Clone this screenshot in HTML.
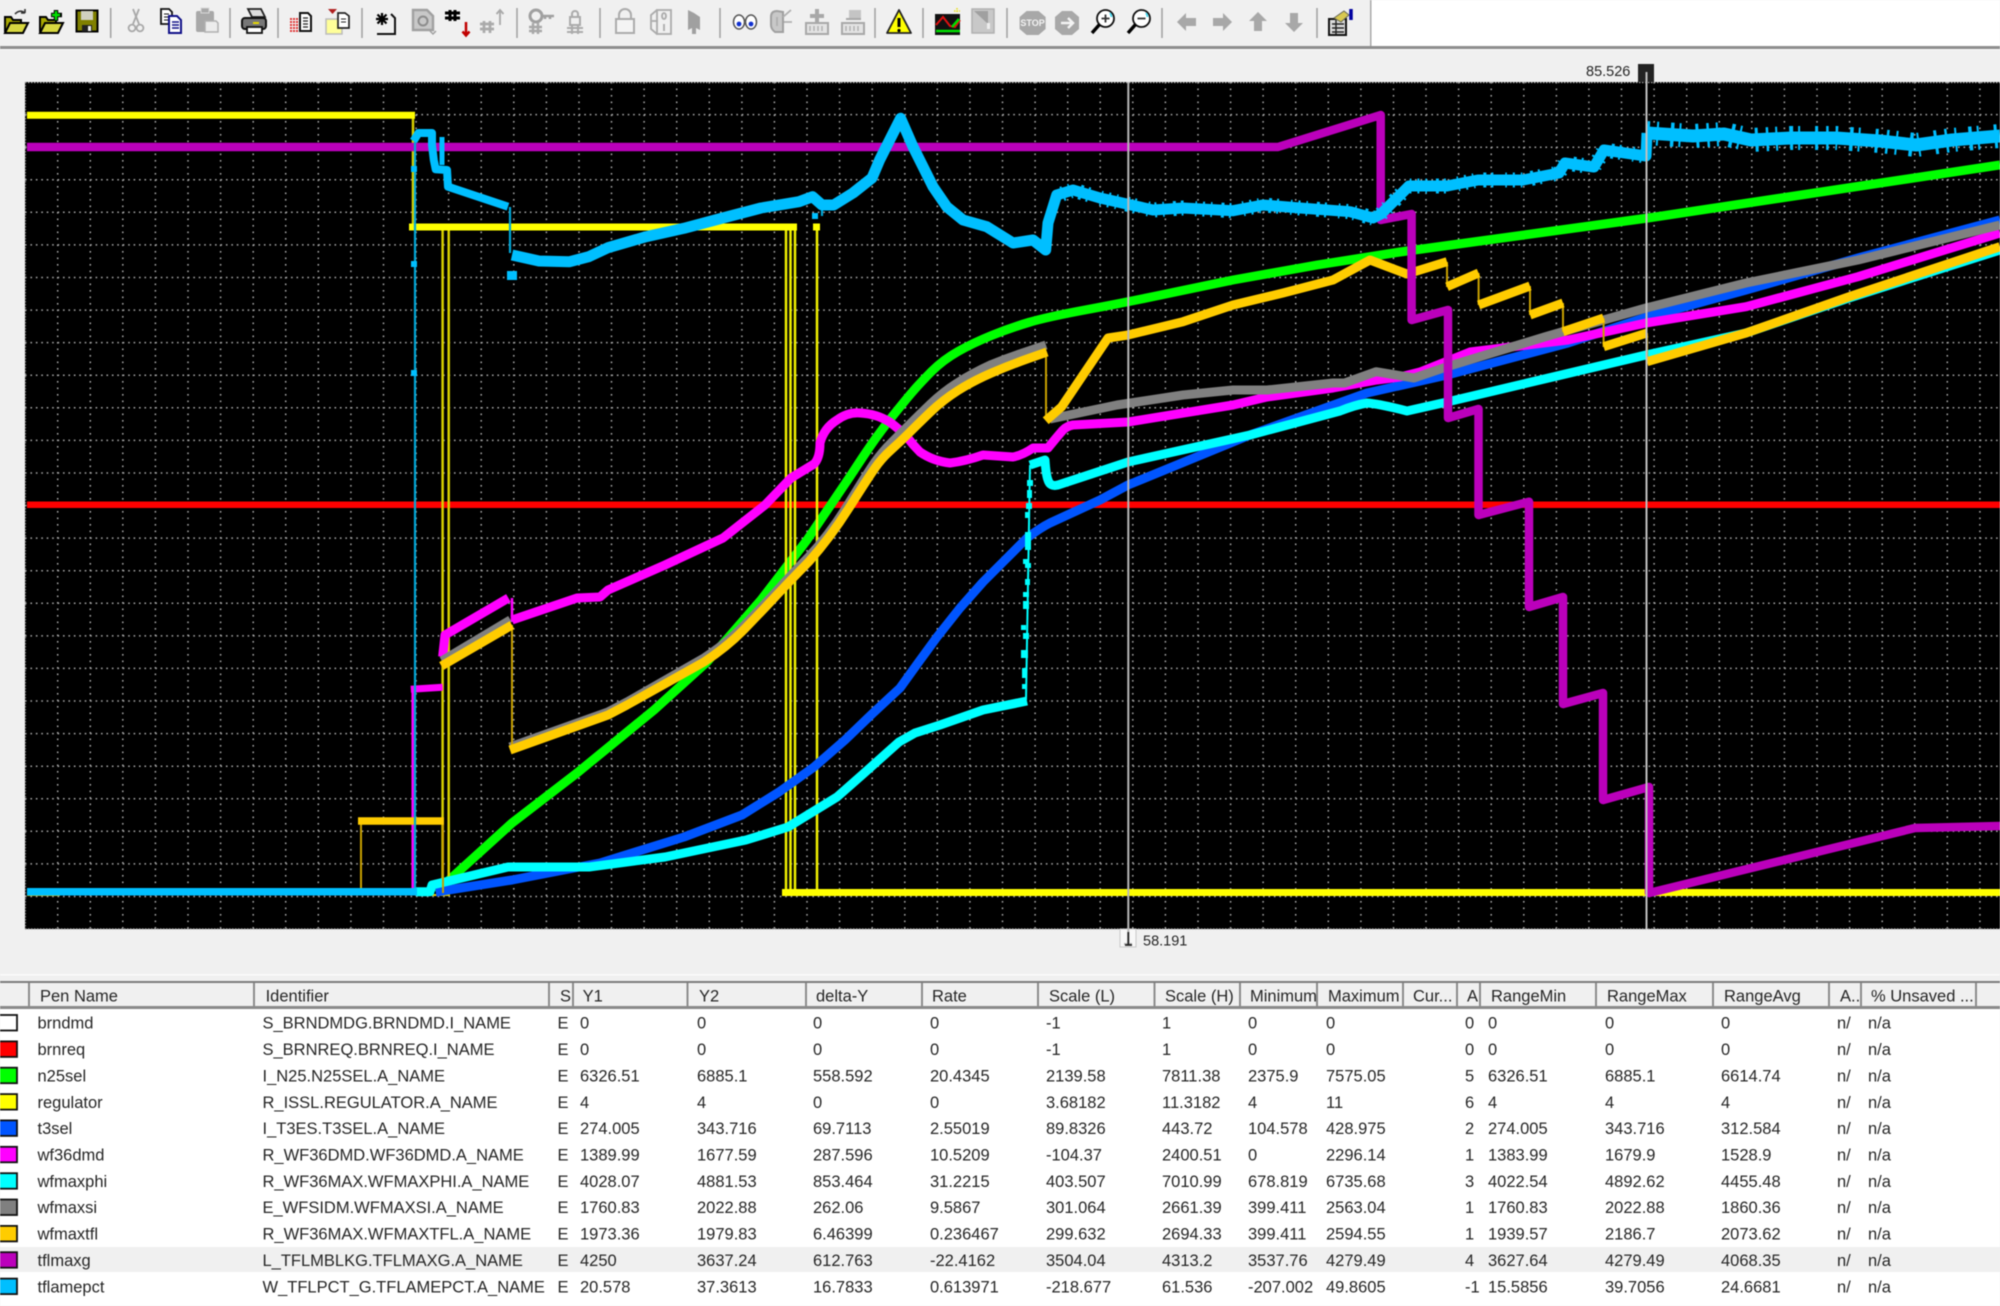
<!DOCTYPE html>
<html><head><meta charset="utf-8"><title>Trend</title>
<style>
html,body{margin:0;padding:0;background:#f0f0f0;width:2000px;height:1306px;overflow:hidden}
svg{display:block;filter:blur(.45px)}
text{font-family:"Liberation Sans",sans-serif;font-size:16.5px;fill:#262626}
.c{fill:none;stroke-linejoin:round;stroke-linecap:butt}
</style></head><body>
<svg width="2000" height="1306" viewBox="0 0 2000 1306" xmlns="http://www.w3.org/2000/svg">
<rect width="2000" height="1306" fill="#f0f0f0"/>
<!-- toolbar -->
<rect x="1371" y="0" width="629" height="46" fill="#fff"/>
<rect x="1370" y="0" width="1.5" height="46" fill="#aaa"/>
<rect y="46" width="2000" height="3" fill="#8e8e8e"/>
<rect y="49" width="2000" height="1" fill="#fafafa"/>
<g stroke="#a0a0a0" stroke-width="1.5"><path d="M110.7 8V38M230 8V38M278 8V38M362 8V38M517 8V38M600 8V38M720 8V38M875 8V38M923 8V38M1007 8V38M1162 8V38M1317 8V38"/></g>

<g transform="translate(16,22)"><path d="M-11 10V-5h6l2 3h8v3" fill="#a8a800" stroke="#000" stroke-width="2"/><path d="M-11 11l5-10h18l-5 10z" fill="#d8d840" stroke="#000" stroke-width="2"/><path d="M-1-8q5-5 10-1m0 0v-4m0 4h-4" fill="none" stroke="#333" stroke-width="1.6"/></g>
<g transform="translate(51,22)"><path d="M-11 10V-5h6l2 3h8v3" fill="#a8a800" stroke="#000" stroke-width="2"/><path d="M-11 11l5-10h18l-5 10z" fill="#d8d840" stroke="#000" stroke-width="2"/><path d="M5-12v11M0-7h11" stroke="#000" stroke-width="4.5"/><path d="M5-11v9M1-7h8" stroke="#00e000" stroke-width="2.4"/></g>
<g transform="translate(87,21)"><rect x="-10.5" y="-10.5" width="21" height="21" fill="#808000" stroke="#000" stroke-width="2"/><rect x="-6" y="-10" width="12" height="9" fill="#d0d0c0"/><rect x="-5" y="4" width="10" height="6.5" fill="#222"/><rect x="1" y="5" width="3" height="5" fill="#eee"/></g>
<g transform="translate(136,21)" fill="none" stroke="#a8a8a8" stroke-width="1.8"><path d="M-3-12L3 3M3-12L-3 3"/><circle cx="-4" cy="7" r="3.4"/><circle cx="4" cy="7" r="3.4"/></g>
<g transform="translate(171,20)"><path d="M-10-11h8l3 3v12H-10z" fill="#fff" stroke="#111" stroke-width="1.8"/><path d="M-7-6h5M-7-3h5M-7 0h5" stroke="#111"/><path d="M-2-4h8l4 4v13H-2z" fill="#fff" stroke="#101088" stroke-width="2"/><path d="M1 2h7M1 5h7M1 8h7" stroke="#101088" stroke-width="1.4"/></g>
<g transform="translate(207,21)"><rect x="-11" y="-10" width="18" height="21" rx="2" fill="#a8a8a8"/><rect x="-6" y="-13" width="8" height="5" fill="#a8a8a8" stroke="#d8d8d8"/><path d="M-2 0h11l2 2v9H-2z" fill="#ececec" stroke="#b0b0b0" stroke-width="1.5"/></g>
<g transform="translate(254,21)"><path d="M-6-12h13l4 8H-2z" fill="#ddd" stroke="#222" stroke-width="1.8"/><rect x="-12" y="-3" width="24" height="11" rx="3" fill="#777" stroke="#111" stroke-width="2"/><rect x="-7" y="6" width="15" height="6" fill="#fff" stroke="#111" stroke-width="1.8"/><path d="M-1 2h6" stroke="#e8d800" stroke-width="2"/></g>
<g transform="translate(301,22)"><path fill="none" stroke="#d22" stroke-width="1.8" stroke-dasharray="2 1" d="M-11-3h10M-11 0h10M-11 3h10M-11 6h10M-11 9h10"/><path d="M-1-9H7l3 3V9H-1z" fill="#fff" stroke="#111" stroke-width="2"/><path d="M2-4h5M2-1h5M2 2h5M2 5h5" stroke="#222" stroke-width="1.3"/></g>
<g transform="translate(338,22)"><path d="M-12 12V-3h16v15z" fill="#ffff99" stroke="#bbb" stroke-width="1.5"/><path d="M-10-13h9l-4.500 5z" fill="#b02020"/><path d="M0-9h7l4 3V6H0z" fill="#fff" stroke="#222" stroke-width="1.7"/><path d="M3-3h5M3 0h5" stroke="#222"/></g>
<g transform="translate(386,22)"><path d="M-9 12H9V-4L5-8" fill="none" stroke="#111" stroke-width="2"/><path d="M-4-9V3M-10-3H2M-8.500-7.500l9 9M.5-7.500l-9 9" stroke="#000" stroke-width="2.200"/></g>
<g transform="translate(422,21)"><path d="M-9-11H5l6 6V9H-9z" fill="#c8c8c8" stroke="#a0a0a0" stroke-width="2.4"/><circle cx="1" cy="0" r="4.500" fill="none" stroke="#8c8c8c" stroke-width="2"/><path d="M8 10l3 3 3-3" stroke="#a0a0a0" fill="none" stroke-width="1.500"/></g>
<g transform="translate(457,22)"><path d="M-7-12V-1M-2-12V-1M-12-9H3M-12-4H3" stroke="#000" stroke-width="3"/><path d="M9 0V13M5.500 9.500l3.500 4 3.500-4" stroke="#c00000" stroke-width="2.500" fill="none"/></g>
<g transform="translate(492,24)"><path d="M-8-3V9M-2-3V9M-12 0H2M-12 5H2" stroke="#aaa" stroke-width="2.700"/><path d="M8 1V-14M4.500-10l3.500-4 3.500 4" stroke="#a8a8a8" stroke-width="1.800" fill="none"/></g>
<g transform="translate(541,22)"><circle cx="-5" cy="-6" r="6" fill="none" stroke="#a0a0a0" stroke-width="3"/><path d="M0-6H13M9-6v3M4-6v3" stroke="#a0a0a0" stroke-width="2.500"/><path d="M-8 1v11M-3 1v11M-12 5h13M-12 9h13" stroke="#a8a8a8" stroke-width="2.400"/></g>
<g transform="translate(575,22)" fill="none" stroke="#ababab" stroke-width="2"><path d="M-3-5v-3a3 3 0 0 1 6 0v3"/><rect x="-5" y="-5" width="10" height="8"/><path d="M-8 6H8M-3 3v9M3 3v9M-8 10H8"/></g>
<g transform="translate(625,22)" fill="none" stroke="#ababab" stroke-width="2"><path d="M-6-3v-4a6 6 0 0 1 12 0v4"/><rect x="-9" y="-3" width="18" height="14" fill="#f4f4f4"/></g>
<g transform="translate(662,22)" fill="none" stroke="#ababab" stroke-width="1.800"><rect x="-5" y="-12" width="14" height="24"/><path d="M-5-12l-6 5v14l6 5"/><path d="M-10-1h6"/><ellipse cx="2" cy="-6" rx="2" ry="3"/><path d="M2 2v7"/></g>
<g transform="translate(694,22)"><path d="M-6-12l6 3 6 4V8l-4-2v6h-4V6l-4 2z" fill="#a0a0a0"/></g>
<g transform="translate(745,22)"><ellipse cx="-6" cy="0" rx="5.500" ry="7" fill="#fff" stroke="#555" stroke-width="1.500"/><ellipse cx="6" cy="0" rx="5.500" ry="7" fill="#fff" stroke="#555" stroke-width="1.500"/><circle cx="-6" cy="2" r="2.400" fill="#1030d0"/><circle cx="6" cy="2" r="2.400" fill="#1030d0"/></g>
<g transform="translate(780,22)"><path d="M-9-5q0-6 6-6l6 1v20H-5q-4-3-4-7z" fill="#c8c8c8" stroke="#a0a0a0" stroke-width="2"/><path d="M3-5L11-12M4 0H12M-3-5v9" stroke="#b0b0b0" stroke-width="1.800"/></g>
<g transform="translate(817,22)"><path d="M-2-13h4v5h5v4H2v4h-4v-4h-5v-4h5z" fill="#a8a8a8"/><rect x="-11" y="1" width="22" height="11" fill="#e4e4e4" stroke="#a8a8a8" stroke-width="2"/><path d="M-7 4v5M-3 4v5M1 4v5M5 4v5" stroke="#b0b0b0" stroke-width="1.500"/></g>
<g transform="translate(853,22)"><path d="M-4-12H8v9H-4z" fill="#c4c4c4"/><path d="M-7-3H8" stroke="#a8a8a8" stroke-width="2"/><rect x="-11" y="1" width="22" height="11" fill="#e4e4e4" stroke="#a8a8a8" stroke-width="2"/><path d="M-7 4v5M-3 4v5M1 4v5M5 4v5" stroke="#b0b0b0" stroke-width="1.500"/></g>
<g transform="translate(899,22)"><path d="M0-12L12 11H-12z" fill="#ffff00" stroke="#222" stroke-width="1.800" stroke-linejoin="round"/><path d="M0-4V5" stroke="#000" stroke-width="3"/><circle cx="0" cy="8.500" r="1.600"/></g>
<g transform="translate(948,22)"><rect x="-13" y="-8" width="25" height="21" fill="#111"/><path d="M-12 9H12" stroke="#00e000" stroke-width="2.500"/><path d="M-12 3L-5-5 2 4l5 1 5-7" fill="none" stroke="#e01010" stroke-width="2"/><path d="M4 5L11-3" stroke="#00dd00" stroke-width="2.500"/><path d="M9-14v5M6-11h6" stroke="#e8e020" stroke-width="1.500" stroke-dasharray="1.500 1"/></g>
<g transform="translate(983,21)"><path d="M-11-12H11V12H-11z" fill="#c8c8c8" stroke="#b0b0b0" stroke-width="1.500"/><path d="M-9-10L5 3V-10z" fill="#a0a0a0"/><rect x="4" y="2" width="3" height="6" fill="#eee"/></g>
<g transform="translate(1032.600,23)"><path d="M-6-12H6l7 6V6L6 12H-6L-13 6V-6z" fill="#a8a8a8"/><text x="0" y="3" text-anchor="middle" style="font-size:9px;font-weight:bold;fill:#f4f4f4">STOP</text></g>
<g transform="translate(1067,23)"><path d="M-5-12H5l7 6V6L5 12H-5L-12 6V-6z" fill="#a8a8a8"/><path d="M-6 0H6M1-5L6 0 1 5" stroke="#f4f4f4" stroke-width="2.500" fill="none"/></g>
<g transform="translate(1103,22)"><circle cx="2.500" cy="-3.500" r="8.500" fill="#fff" stroke="#111" stroke-width="1.800"/><path d="M-3.500 2.500L-11 11" stroke="#000" stroke-width="3.400"/><path d="M2.500-7.500v8M-1.500-3.500h8" stroke="#333" stroke-width="1.800"/><path d="M7-9a7 7 0 0 1 1.500 4" stroke="#40d8f0" stroke-width="1.800" fill="none"/></g>
<g transform="translate(1139,22)"><circle cx="2.500" cy="-3.500" r="8.500" fill="#fff" stroke="#111" stroke-width="1.800"/><path d="M-3.500 2.500L-11 11" stroke="#000" stroke-width="3.400"/><path d="M-1.500-3.500h8" stroke="#333" stroke-width="1.800"/><path d="M7-9a7 7 0 0 1 1.500 4" stroke="#40d8f0" stroke-width="1.800" fill="none"/></g>
<path transform="translate(1187,22)" d="M-10 0L-1-9V-4H9V4H-1V9z" fill="#a8a8a8"/>
<path transform="translate(1222,22)" d="M10 0L1-9V-4H-9V4H1V9z" fill="#a8a8a8"/>
<path transform="translate(1258,22)" d="M0-10L9-1H4V9H-4V-1H-9z" fill="#a8a8a8"/>
<path transform="translate(1294,22)" d="M0 10L9 1H4V-9H-4V1H-9z" fill="#a8a8a8"/>
<g transform="translate(1341,22)"><rect x="-12" y="-3" width="17" height="16" fill="#ddd" stroke="#111" stroke-width="2"/><path d="M-9 2H3M-9 6H3M-9 10H3M-5-2V12" stroke="#222" stroke-width="1.400"/><path d="M-7-4L3-11l5 4L0 0z" fill="#d8c850" stroke="#665" stroke-width="1"/><path d="M10-13V-2" stroke="#0000a0" stroke-width="3.500"/></g>

<!-- plot -->
<rect x="25" y="82" width="1975" height="847" fill="#000"/>
<path d="M25 82.500H2000M25 929H2000" stroke="#aaa" stroke-width="1.200" stroke-dasharray="1.500 1.500" fill="none"/>
<path d="M25.500 82V929" stroke="#777" stroke-width="1.200" stroke-dasharray="1.500 1.500" fill="none"/>
<path fill="none" stroke="#a4a4a4" stroke-width="1.500" stroke-dasharray="1.600 3.830" d="M25 114.600H2000M25 147.200H2000M25 179.700H2000M25 212.300H2000M25 244.900H2000M25 277.500H2000M25 310.100H2000M25 342.600H2000M25 375.200H2000M25 407.800H2000M25 440.400H2000M25 473H2000M25 505.500H2000M25 538.100H2000M25 570.700H2000M25 603.300H2000M25 635.900H2000M25 668.400H2000M25 701H2000M25 733.600H2000M25 766.200H2000M25 798.800H2000M25 831.300H2000M25 863.900H2000M25 896.500H2000"/>
<path fill="none" stroke="#a4a4a4" stroke-width="1.500" stroke-dasharray="1.600 4.900" d="M57.700 82V929M90.300 82V929M122.800 82V929M155.400 82V929M188 82V929M220.600 82V929M253.200 82V929M285.700 82V929M318.300 82V929M350.900 82V929M383.500 82V929M416.100 82V929M448.600 82V929M481.200 82V929M513.800 82V929M546.400 82V929M579 82V929M611.500 82V929M644.100 82V929M676.700 82V929M709.300 82V929M741.900 82V929M774.400 82V929M807 82V929M839.600 82V929M872.200 82V929M904.800 82V929M937.300 82V929M969.900 82V929M1002.500 82V929M1035.100 82V929M1067.700 82V929M1100.200 82V929M1132.800 82V929M1165.400 82V929M1198 82V929M1230.600 82V929M1263.100 82V929M1295.700 82V929M1328.300 82V929M1360.900 82V929M1393.500 82V929M1426 82V929M1458.600 82V929M1491.200 82V929M1523.800 82V929M1556.400 82V929M1588.900 82V929M1621.500 82V929M1654.100 82V929M1686.700 82V929M1719.300 82V929M1751.800 82V929M1784.400 82V929M1817 82V929M1849.600 82V929M1882.200 82V929M1914.700 82V929M1947.300 82V929M1979.900 82V929"/>

<!-- red -->
<path class="c" d="M27 504.700H2000" stroke="#ff0000" stroke-width="6.500"/>
<!-- green -->
<path class="c" stroke="#00ff00" stroke-width="9" d="M436 892L512 823L577 773L654 710L707 662L761 600L807 540L849 478L862.500 457.500Q876 437 889.500 420Q903 403 911.500 393Q920 383 931.500 371.500Q943 360 958 351.500Q973 343 991.500 335.500Q1010 328 1028.500 322.500Q1047 317 1087.500 309.500Q1128 302 1180 291L1233 280L1317 265L1400 252L1648 218L2000 165"/>
<!-- regulator -->
<path class="c" stroke="#d8d000" stroke-width="2.500" d="M413 118V227M442.600 227V893M448.700 227V893"/>
<path class="c" stroke="#f0f000" stroke-width="2.500" d="M786 227V893M790.500 227V893M795 227V893M817 227V893"/>
<path class="c" stroke="#ffff00" stroke-width="7" d="M27 115.300H415M409 227H797M813 227H820M782 892.500H2000"/>
<path class="c" stroke="#e0c800" stroke-width="2" d="M27 895H60M420 895H450"/>
<!-- t3sel -->
<path class="c" stroke="#0055ff" stroke-width="9" d="M435.700 892L512 880L600 863L684 837L742 815L779 792L814 767L845 740L872 714L900 688L918 663L937 637L960 608L983 582L1005 560L1027 538Q1040 528 1050 523L1100 500L1128 485L1250 435L1300 417L1367 393L1447 375L1568 343L1648 316.700L1746 290L1858 258L2000 220"/>
<!-- wf36dmd -->
<path class="c" stroke="#ff00ff" stroke-width="2.500" d="M412.700 690V890M512 598V622"/>
<path class="c" stroke="#ff00ff" stroke-width="7" d="M410.800 689.300L442.600 687.300"/>
<path class="c" stroke="#ff00ff" stroke-width="9" d="M442.600 656.700L445 635L508.400 598M512 620L577 598L600 597L608 590L665 565L723 538L765 505L791 478L814 464Q820 458 820 443Q824 428 837 420Q848 412 860 413Q878 414 891 423Q899 429 907 437Q913 445 920 452Q933 461 950 463Q966 461 983 455Q998 456 1013 457Q1023 455 1033 448L1048 448Q1056 438 1063 430Q1067 426 1073 425L1128 422L1233 405L1267 397L1333 388L1377 380L1400 377L1420 372L1470 352L1568 340L1646 323L1746 306.700L1858 276.700L2000 233"/>
<!-- wfmaxphi -->
<path class="c" stroke="#00ffff" stroke-width="9" d="M416 891.700H430L432 885L508 867L589 867L665 857L746 840L788 827L837 797L862 775L899 742L915 733L940 725L983 710L1027 701"/>
<path class="c" stroke="#00ffff" stroke-width="2" d="M1026 700L1030 465"/>
<g fill="#00ffff"><rect x="1026" y="503" width="6" height="6"/><rect x="1025" y="512" width="5" height="6"/><rect x="1025" y="532" width="6" height="18"/><rect x="1023" y="559" width="5" height="5"/><rect x="1025" y="563" width="6" height="5"/><rect x="1025" y="579" width="5" height="6"/><rect x="1023" y="592" width="6" height="5"/><rect x="1023" y="601" width="6" height="8"/><rect x="1021" y="625" width="5" height="5"/><rect x="1023" y="633" width="6" height="6"/><rect x="1021" y="650" width="7" height="8"/><rect x="1022" y="668" width="5" height="10"/><rect x="1022" y="684" width="5" height="5"/><rect x="1027" y="480" width="6" height="6"/><rect x="1027" y="490" width="5" height="8"/></g>
<path class="c" stroke="#00ffff" stroke-width="9" d="M1030 465L1045 460Q1046 475 1048 480Q1050 487 1058 485L1128 462L1250 435L1340 411Q1355 405 1367 403Q1380 404 1407 411L1447 402L1646 355L1746 333L1849 298L2000 250"/>
<!-- wfmaxsi -->
<path class="c" stroke="#808080" stroke-width="7" d="M441.400 660L510 619"/>
<path class="c" stroke="#808080" stroke-width="9" d="M510 747L608 712L627 702L704 658Q727 643 744 625.500Q761 608 774.500 593.500Q788 578 809 556.500Q830 534 849 503Q868 472 875 462Q882 452 891 443Q900 434 909 425Q918 416 930.500 404Q943 392 958 382.500Q973 373 991.500 364.500Q1010 357 1028.500 351L1046 345"/>
<path class="c" stroke="#808080" stroke-width="9" d="M1050 419L1117 405L1183 395L1233 390L1267 390L1333 383L1344.600 383L1376 371.700L1414 378L1447 366.700L1545.500 336.700L1603.600 320L1646 308L1746 283L1858 260L2000 225"/>
<!-- wfmaxtfl -->
<path class="c" stroke="#c8a000" stroke-width="2" d="M361 821V893M443 821V893M512 625V750M1046 353V420M1447 262V287M1478.600 273V305M1530 286V315M1563 303V332M1603.600 318V347M1647 333V362"/>
<path class="c" stroke="#ffcc00" stroke-width="7.500" d="M358 821H444"/>
<path class="c" stroke="#ffcc00" stroke-width="9" d="M441.400 666L512 625M510 750L608 715L627 705L704 662Q727 647 744 629.500Q761 612 774.500 597.500Q788 583 809 561.500Q830 538 849 508Q868 478 875 468Q882 458 891 450Q900 442 909 433Q918 424 930.500 412Q943 400 958 390.500Q973 381 991.500 373Q1010 365 1028.500 358.500L1047 352M1045.700 420.700L1061.700 406.700L1108 338L1128 335L1183 321.700L1233 305L1283 293L1333 280L1370 260L1407 274L1447 261.700M1447 286.700L1478.600 273M1478.600 305L1530 286M1530 315L1563 303M1563 331.700L1603.600 318M1603.600 346.700L1647 333M1647 361.700L1746 333L1849 296.700L2000 246.700"/>
<!-- tflmaxg -->
<path class="c" stroke="#bb00bb" stroke-width="8.500" stroke-linejoin="miter" d="M27 147H1278L1380.700 115V220L1411.600 214V320L1448 310V418L1478.500 409V515L1529 501.700V607L1563 597V704L1603 693V800L1649 787V893L1915 828L2000 826"/>
<!-- tflamepct -->
<path class="c" stroke="#00a8d8" stroke-width="2.200" d="M415 893V140M510 207V253M822 205V216"/>
<rect x="27" y="888" width="390" height="7.500" fill="#00bfff"/>
<g fill="#00bfff"><rect x="411" y="166" width="6" height="6"/><rect x="411" y="261" width="6" height="6"/><rect x="411" y="370" width="6" height="6"/><rect x="507" y="271" width="10" height="9"/><rect x="812" y="213" width="6" height="6"/></g>
<path class="c" stroke="#00bfff" stroke-width="8" d="M413.500 141L418.500 133H432V145L433.800 160L435.700 169.300L447 170L448 186.700L508 206.700"/>
<path class="c" stroke="#00bfff" stroke-width="5" d="M442 137V165"/>
<path class="c" stroke="#00bfff" stroke-width="11" d="M512 255L539 261L569.600 261.700L588.800 256.700L608 247.700L646 236.700L684 228.300L722.700 218L761 208L799 201.700L812.600 196.700L822 205L833.700 205L853 193L872 178L879.600 160L900.600 118.300L913 146.700L933 186.700L946.700 206.700L963 220L986.700 226.700L1013 243L1033 240L1045.700 250L1048 223L1056.700 195L1073 190L1100 198L1126.700 204L1153 210L1183 208L1233 210.700L1263 205L1300 208L1350 211.700L1373 218L1381 214L1409 186L1447 186L1478 180L1523 180L1559 173L1565 163L1594 167L1604 150L1646 156L1647 133"/>
<path class="c" stroke="#00bfff" stroke-width="15" stroke-dasharray="2 6 1.500 9 3 5 2 12 1.500 6" d="M1062 194L1073 190L1100 198L1126.700 204L1153 210L1183 208L1233 210.700L1263 205L1300 208L1350 211.700L1373 218M1381 214L1409 186L1447 186L1478 180L1523 180L1559 173L1565 163L1594 167L1604 150L1646 156"/>
<path class="c" stroke="#00bfff" stroke-width="13" d="M1647 133L1693 136L1724 134L1751 140L1791 138L1836 138L1880 141L1916 145L1952 140L2000 136"/>
<path class="c" stroke="#00bfff" stroke-width="24" stroke-dasharray="2.500 7 2 12 3.500 5 2 15 3 8" d="M1647 133L1693 136L1724 134L1751 140L1791 138L1836 138L1880 141L1916 145L1952 140L2000 136"/>

<!-- cursors -->
<rect x="1120" y="929" width="16" height="18" fill="#f8f8f8" stroke="#c8c8c8"/>
<path d="M1128.300 82V943M1124 944h8" stroke="#b8b8b8" stroke-width="2" fill="none"/>
<path d="M1128.300 932V945M1125 945h7" stroke="#222" stroke-width="1.800" fill="none"/>
<text x="1143" y="945.500" style="font-size:14.500px">58.191</text>
<rect x="1638" y="64" width="16" height="18" fill="#222"/>
<path d="M1646.500 72V929" stroke="#c0c0c0" stroke-width="2"/>
<text x="1586" y="76" style="font-size:14.500px">85.526</text>

<!-- table -->
<rect y="974" width="2000" height="1.500" fill="#fbfbfb"/>
<rect y="981" width="2000" height="2" fill="#7c7c7c"/>
<rect y="1006" width="2000" height="3" fill="#8a8a8a"/>
<rect y="1009" width="2000" height="297" fill="#fff"/>
<path d="M29 983V1006M254 983V1006M549 983V1006M573 983V1006M806 983V1006M687.500 983V1006M922 983V1006M1038 983V1006M1154.500 983V1006M1240 983V1006M1317 983V1006M1403 983V1006M1457 983V1006M1480 983V1006M1596 983V1006M1713 983V1006M1829 983V1006M1861 983V1006M1976 983V1006" stroke="#8c8c8c" stroke-width="2"/>
<text y="1001.700"><tspan x="40">Pen Name</tspan><tspan x="265.600">Identifier</tspan><tspan x="560">S</tspan><tspan x="582.600">Y1</tspan><tspan x="699">Y2</tspan><tspan x="816">delta-Y</tspan><tspan x="932">Rate</tspan><tspan x="1049">Scale (L)</tspan><tspan x="1165">Scale (H)</tspan><tspan x="1250">Minimum</tspan><tspan x="1328">Maximum</tspan><tspan x="1413">Cur...</tspan><tspan x="1467">A</tspan><tspan x="1491">RangeMin</tspan><tspan x="1607">RangeMax</tspan><tspan x="1724">RangeAvg</tspan><tspan x="1840">A..</tspan><tspan x="1871">% Unsaved ...</tspan></text>
<rect y="1247" width="2000" height="25" fill="#f0f0f0"/>
<g stroke="#111" stroke-width="1.800">
<rect x="-4" y="1015" width="21" height="15.500" fill="#fff"/><rect x="-4" y="1041.400" width="21" height="15.500" fill="#ff0000"/><rect x="-4" y="1067.700" width="21" height="15.500" fill="#00ff00"/><rect x="-4" y="1094.100" width="21" height="15.500" fill="#ffff00"/><rect x="-4" y="1120.400" width="21" height="15.500" fill="#0055ff"/><rect x="-4" y="1146.800" width="21" height="15.500" fill="#ff00ff"/><rect x="-4" y="1173.200" width="21" height="15.500" fill="#00ffff"/><rect x="-4" y="1199.500" width="21" height="15.500" fill="#808080"/><rect x="-4" y="1225.900" width="21" height="15.500" fill="#ffcc00"/><rect x="-4" y="1252.200" width="21" height="15.500" fill="#bb00bb"/><rect x="-4" y="1278.600" width="21" height="15.500" fill="#00bfff"/>
</g>
<text y="1028.700"><tspan x="37.500">brndmd</tspan><tspan x="262.500">S_BRNDMDG.BRNDMD.I_NAME</tspan><tspan x="557.500">E</tspan><tspan x="580">0</tspan><tspan x="697">0</tspan><tspan x="813">0</tspan><tspan x="930">0</tspan><tspan x="1046">-1</tspan><tspan x="1162">1</tspan><tspan x="1248">0</tspan><tspan x="1326">0</tspan><tspan x="1465">0</tspan><tspan x="1488">0</tspan><tspan x="1605">0</tspan><tspan x="1721">0</tspan><tspan x="1837">n/</tspan><tspan x="1868">n/a</tspan></text>
<text y="1055.100"><tspan x="37.500">brnreq</tspan><tspan x="262.500">S_BRNREQ.BRNREQ.I_NAME</tspan><tspan x="557.500">E</tspan><tspan x="580">0</tspan><tspan x="697">0</tspan><tspan x="813">0</tspan><tspan x="930">0</tspan><tspan x="1046">-1</tspan><tspan x="1162">1</tspan><tspan x="1248">0</tspan><tspan x="1326">0</tspan><tspan x="1465">0</tspan><tspan x="1488">0</tspan><tspan x="1605">0</tspan><tspan x="1721">0</tspan><tspan x="1837">n/</tspan><tspan x="1868">n/a</tspan></text>
<text y="1081.400"><tspan x="37.500">n25sel</tspan><tspan x="262.500">I_N25.N25SEL.A_NAME</tspan><tspan x="557.500">E</tspan><tspan x="580">6326.51</tspan><tspan x="697">6885.1</tspan><tspan x="813">558.592</tspan><tspan x="930">20.4345</tspan><tspan x="1046">2139.58</tspan><tspan x="1162">7811.38</tspan><tspan x="1248">2375.9</tspan><tspan x="1326">7575.05</tspan><tspan x="1465">5</tspan><tspan x="1488">6326.51</tspan><tspan x="1605">6885.1</tspan><tspan x="1721">6614.74</tspan><tspan x="1837">n/</tspan><tspan x="1868">n/a</tspan></text>
<text y="1107.800"><tspan x="37.500">regulator</tspan><tspan x="262.500">R_ISSL.REGULATOR.A_NAME</tspan><tspan x="557.500">E</tspan><tspan x="580">4</tspan><tspan x="697">4</tspan><tspan x="813">0</tspan><tspan x="930">0</tspan><tspan x="1046">3.68182</tspan><tspan x="1162">11.3182</tspan><tspan x="1248">4</tspan><tspan x="1326">11</tspan><tspan x="1465">6</tspan><tspan x="1488">4</tspan><tspan x="1605">4</tspan><tspan x="1721">4</tspan><tspan x="1837">n/</tspan><tspan x="1868">n/a</tspan></text>
<text y="1134.100"><tspan x="37.500">t3sel</tspan><tspan x="262.500">I_T3ES.T3SEL.A_NAME</tspan><tspan x="557.500">E</tspan><tspan x="580">274.005</tspan><tspan x="697">343.716</tspan><tspan x="813">69.7113</tspan><tspan x="930">2.55019</tspan><tspan x="1046">89.8326</tspan><tspan x="1162">443.72</tspan><tspan x="1248">104.578</tspan><tspan x="1326">428.975</tspan><tspan x="1465">2</tspan><tspan x="1488">274.005</tspan><tspan x="1605">343.716</tspan><tspan x="1721">312.584</tspan><tspan x="1837">n/</tspan><tspan x="1868">n/a</tspan></text>
<text y="1160.500"><tspan x="37.500">wf36dmd</tspan><tspan x="262.500">R_WF36DMD.WF36DMD.A_NAME</tspan><tspan x="557.500">E</tspan><tspan x="580">1389.99</tspan><tspan x="697">1677.59</tspan><tspan x="813">287.596</tspan><tspan x="930">10.5209</tspan><tspan x="1046">-104.37</tspan><tspan x="1162">2400.51</tspan><tspan x="1248">0</tspan><tspan x="1326">2296.14</tspan><tspan x="1465">1</tspan><tspan x="1488">1383.99</tspan><tspan x="1605">1679.9</tspan><tspan x="1721">1528.9</tspan><tspan x="1837">n/</tspan><tspan x="1868">n/a</tspan></text>
<text y="1186.900"><tspan x="37.500">wfmaxphi</tspan><tspan x="262.500">R_WF36MAX.WFMAXPHI.A_NAME</tspan><tspan x="557.500">E</tspan><tspan x="580">4028.07</tspan><tspan x="697">4881.53</tspan><tspan x="813">853.464</tspan><tspan x="930">31.2215</tspan><tspan x="1046">403.507</tspan><tspan x="1162">7010.99</tspan><tspan x="1248">678.819</tspan><tspan x="1326">6735.68</tspan><tspan x="1465">3</tspan><tspan x="1488">4022.54</tspan><tspan x="1605">4892.62</tspan><tspan x="1721">4455.48</tspan><tspan x="1837">n/</tspan><tspan x="1868">n/a</tspan></text>
<text y="1213.200"><tspan x="37.500">wfmaxsi</tspan><tspan x="262.500">E_WFSIDM.WFMAXSI.A_NAME</tspan><tspan x="557.500">E</tspan><tspan x="580">1760.83</tspan><tspan x="697">2022.88</tspan><tspan x="813">262.06</tspan><tspan x="930">9.5867</tspan><tspan x="1046">301.064</tspan><tspan x="1162">2661.39</tspan><tspan x="1248">399.411</tspan><tspan x="1326">2563.04</tspan><tspan x="1465">1</tspan><tspan x="1488">1760.83</tspan><tspan x="1605">2022.88</tspan><tspan x="1721">1860.36</tspan><tspan x="1837">n/</tspan><tspan x="1868">n/a</tspan></text>
<text y="1239.600"><tspan x="37.500">wfmaxtfl</tspan><tspan x="262.500">R_WF36MAX.WFMAXTFL.A_NAME</tspan><tspan x="557.500">E</tspan><tspan x="580">1973.36</tspan><tspan x="697">1979.83</tspan><tspan x="813">6.46399</tspan><tspan x="930">0.236467</tspan><tspan x="1046">299.632</tspan><tspan x="1162">2694.33</tspan><tspan x="1248">399.411</tspan><tspan x="1326">2594.55</tspan><tspan x="1465">1</tspan><tspan x="1488">1939.57</tspan><tspan x="1605">2186.7</tspan><tspan x="1721">2073.62</tspan><tspan x="1837">n/</tspan><tspan x="1868">n/a</tspan></text>
<text y="1265.900"><tspan x="37.500">tflmaxg</tspan><tspan x="262.500">L_TFLMBLKG.TFLMAXG.A_NAME</tspan><tspan x="557.500">E</tspan><tspan x="580">4250</tspan><tspan x="697">3637.24</tspan><tspan x="813">612.763</tspan><tspan x="930">-22.4162</tspan><tspan x="1046">3504.04</tspan><tspan x="1162">4313.2</tspan><tspan x="1248">3537.76</tspan><tspan x="1326">4279.49</tspan><tspan x="1465">4</tspan><tspan x="1488">3627.64</tspan><tspan x="1605">4279.49</tspan><tspan x="1721">4068.35</tspan><tspan x="1837">n/</tspan><tspan x="1868">n/a</tspan></text>
<text y="1292.300"><tspan x="37.500">tflamepct</tspan><tspan x="262.500">W_TFLPCT_G.TFLAMEPCT.A_NAME</tspan><tspan x="557.500">E</tspan><tspan x="580">20.578</tspan><tspan x="697">37.3613</tspan><tspan x="813">16.7833</tspan><tspan x="930">0.613971</tspan><tspan x="1046">-218.677</tspan><tspan x="1162">61.536</tspan><tspan x="1248">-207.002</tspan><tspan x="1326">49.8605</tspan><tspan x="1465">-1</tspan><tspan x="1488">15.5856</tspan><tspan x="1605">39.7056</tspan><tspan x="1721">24.6681</tspan><tspan x="1837">n/</tspan><tspan x="1868">n/a</tspan></text>
</svg>
</body></html>
